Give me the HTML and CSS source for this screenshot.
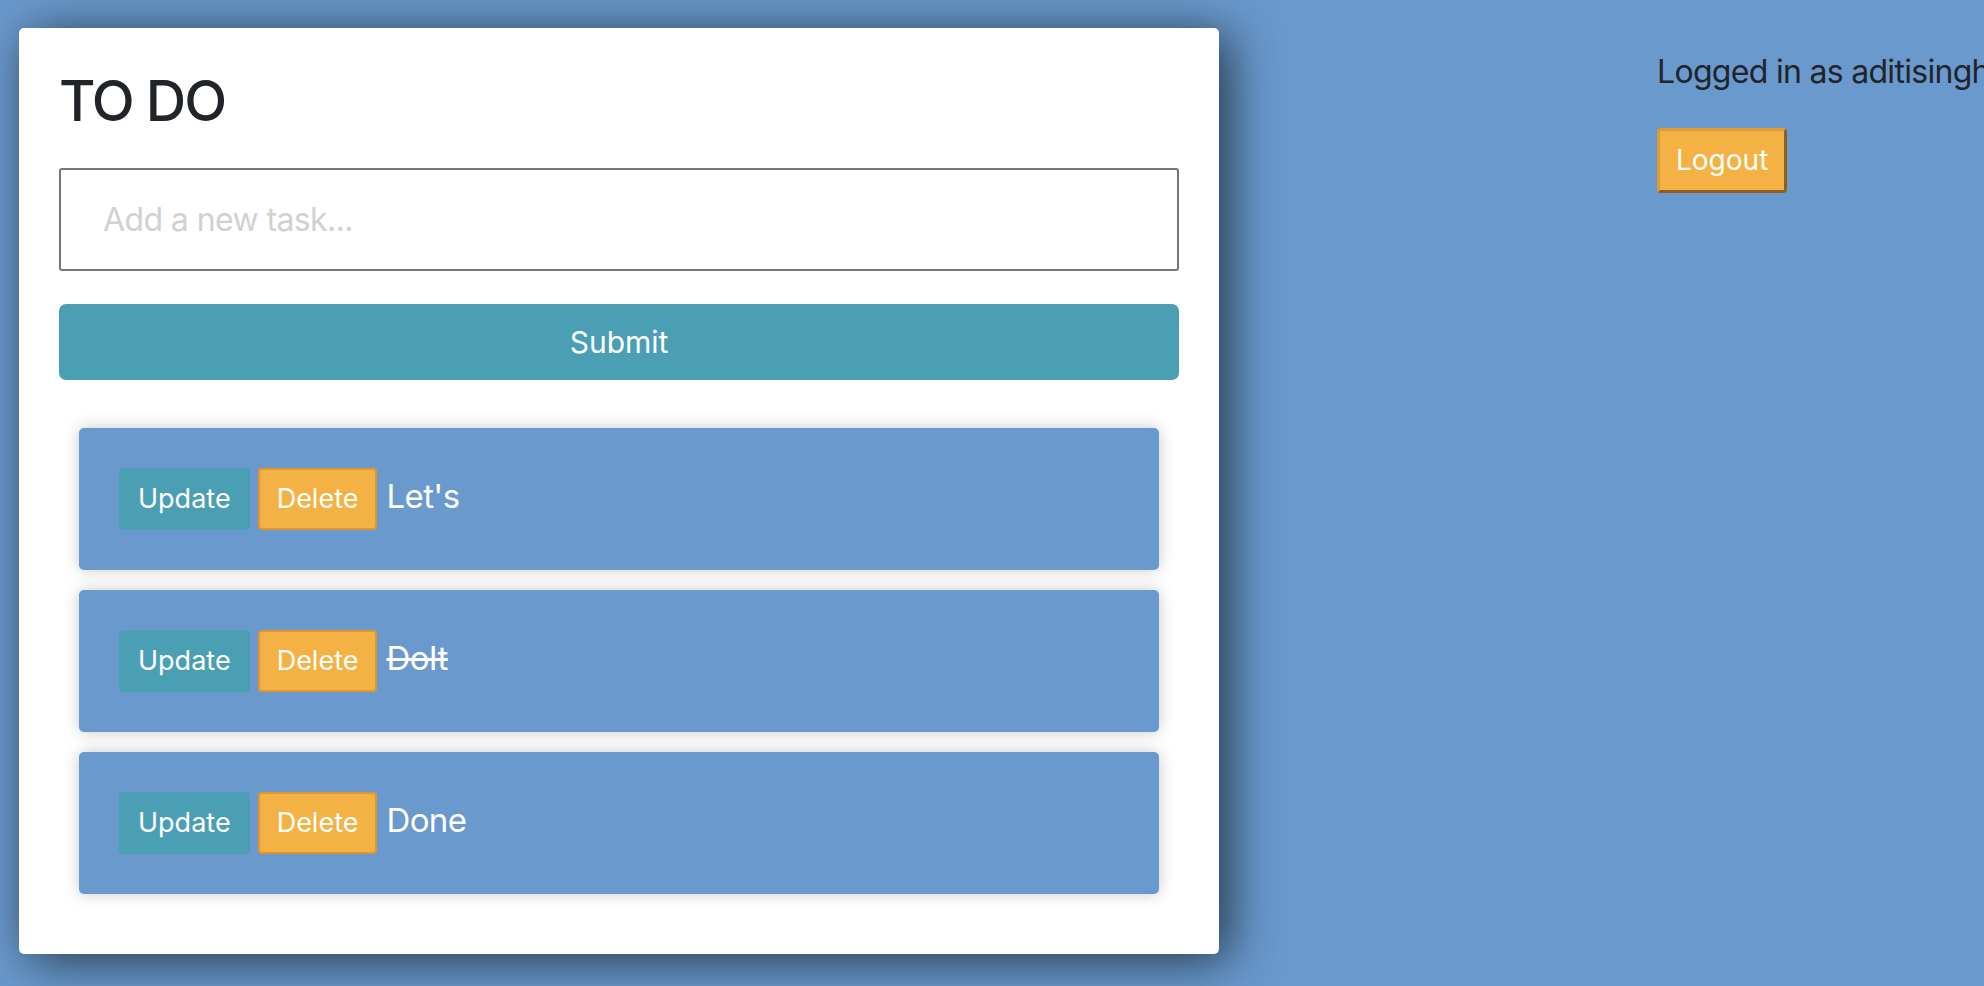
FILE: index.html
```html
<!DOCTYPE html>
<html lang="en">
<head>
<meta charset="utf-8">
<title>TO DO</title>
<link rel="stylesheet" href="styles.css">
</head>
<body>
<div class="page">
  <main class="card">
    <h1 class="title">TO DO</h1>
    <form class="task-form">
      <input class="task-input" type="text" placeholder="Add a new task...">
      <button class="submit-btn" type="button">Submit</button>
    </form>
    <ul class="task-list">
      <li class="task">
        <button class="btn btn-update" type="button">Update</button>
        <button class="btn btn-delete" type="button">Delete</button>
        <span class="task-text">Let's</span>
      </li>
      <li class="task">
        <button class="btn btn-update" type="button">Update</button>
        <button class="btn btn-delete" type="button">Delete</button>
        <span class="task-text done">DoIt</span>
      </li>
      <li class="task">
        <button class="btn btn-update" type="button">Update</button>
        <button class="btn btn-delete" type="button">Delete</button>
        <span class="task-text">Done</span>
      </li>
    </ul>
  </main>
  <aside class="account">
    <p class="account-name">Logged in as aditisingh</p>
    <button class="logout-btn" type="button">Logout</button>
  </aside>
</div>
</body>
</html>
```
FILE: styles.css
```css
html, body {
  margin: 0;
  padding: 0;
  overflow: hidden;
  height: 100%;
}

body {
  background: #6999cd;
  font-family: Inter, "Noto Sans", "Liberation Sans", sans-serif;
  color: #212529;
}

.page {
  display: flex;
  align-items: flex-start;
  padding: 28px 0 0 19px;
}

.card {
  flex: 0 0 auto;
  width: 1120px;
  padding: 40px;
  background: #ffffff;
  border-radius: 5px;
  box-shadow: 10px 6px 50px rgba(0, 0, 0, 0.65);
}

.title {
  margin: 0 0 32px 0;
  font-size: 56px;
  font-weight: 500;
  line-height: 1.21;
  letter-spacing: -2px;
  color: #212529;
}

.task-form {
  display: flex;
  flex-direction: column;
  gap: 33px;
}

.task-input {
  box-sizing: border-box;
  width: 100%;
  height: 103px;
  padding: 0 42px;
  border: 2px solid #767676;
  border-radius: 3px;
  font-family: inherit;
  font-size: 32px;
  letter-spacing: -0.6px;
  color: #212529;
  background: #fff;
  outline: none;
}

.task-input::placeholder {
  color: #d1d1d1;
}

.submit-btn {
  width: 100%;
  height: 76px;
  border: none;
  border-radius: 7px;
  background: #4a9fb5;
  color: #ffffff;
  font-family: inherit;
  font-size: 30px;
  padding: 0;
}

.task-list {
  list-style: none;
  margin: 48px 20px 20px 20px;
  padding: 0;
  display: flex;
  flex-direction: column;
  gap: 20px;
}

.task {
  display: flex;
  align-items: baseline;
  padding: 40px;
  background: #6999cd;
  border-radius: 5px;
  box-shadow: 0 0 16px rgba(0, 0, 0, 0.22);
  font-size: 33px;
}

.btn {
  box-sizing: border-box;
  height: 62px;
  padding: 0 17px;
  border: 2px solid transparent;
  border-radius: 4px;
  font-family: inherit;
  font-size: 27px;
  line-height: 58px;
  color: #ffffff;
}

.btn-update {
  background: #4a9fb5;
  border-color: #4a9fb5;
  margin-right: 8px;
}

.btn-delete {
  background: #f4b244;
  border-color: #e0962c;
  margin-right: 9px;
}

.task-text {
  color: #ffffff;
  line-height: 1.21;
  letter-spacing: -0.6px;
}

.task-text.done {
  text-decoration: line-through;
}

.account {
  flex: 0 0 auto;
  margin-left: 438px;
  padding-top: 25px;
  white-space: nowrap;
}

.account-name {
  margin: 0 0 36px 0;
  font-size: 32px;
  line-height: 1.21;
  letter-spacing: -0.7px;
  color: #212529;
}

.logout-btn {
  box-sizing: border-box;
  height: 65px;
  padding: 0 16px;
  border: 3px solid;
  border-color: #dd9a35 #8f5f1f #8f5f1f #dd9a35;
  border-radius: 4px;
  background: #f4b244;
  color: #ffffff;
  font-family: inherit;
  font-size: 28px;
  line-height: 59px;
}
```
